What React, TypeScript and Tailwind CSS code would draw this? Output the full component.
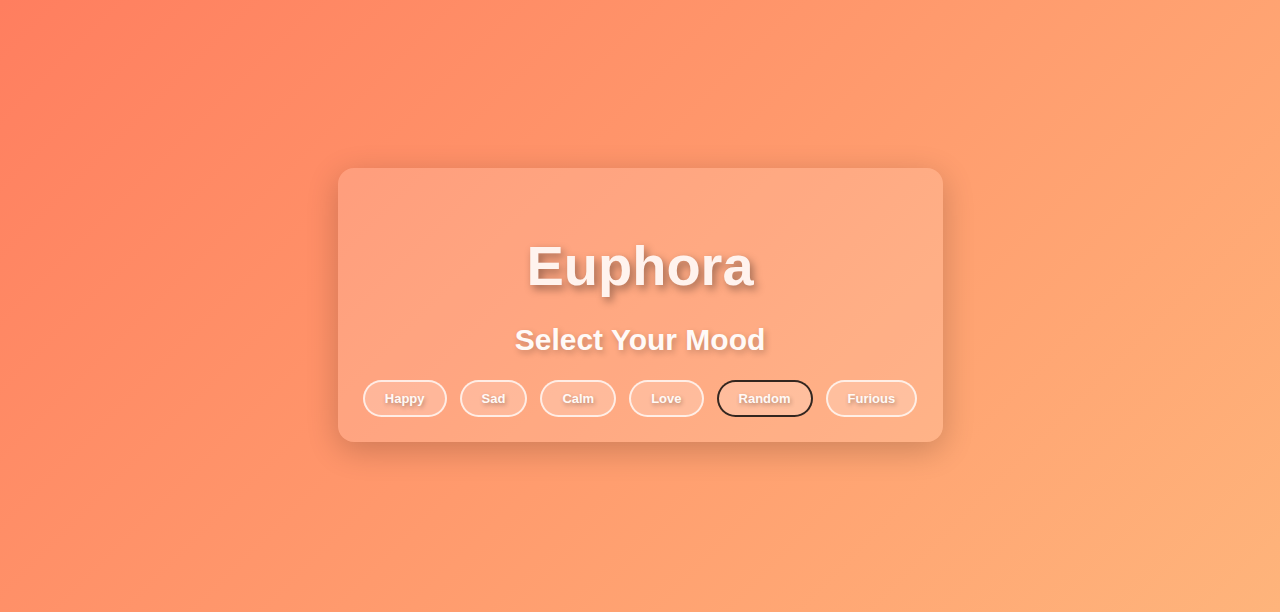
const moods = ['Happy', 'Sad', 'Calm', 'Love', 'Random', 'Furious'];

export default function App() {
  return (
    <div
      className="min-h-screen flex items-center justify-center bg-linear-135 from-[#ff7e5f] to-[#feb47b]"
      style={{ fontFamily: '"Liberation Sans", Arial, sans-serif' }}
    >
      {/* Mood card */}
      <div className="w-[605px] h-[274px] mb-[2px] rounded-2xl bg-white/15 shadow-[0_8px_32px_rgba(0,0,0,0.2)] px-[25px] pb-[25px] pt-[66px] flex flex-col items-center text-center">
        <h1 className="text-[56px] font-bold leading-[64px] text-[#fff3ee] [text-shadow:3px_4px_9px_rgba(0,0,0,0.38)]">
          Euphora
        </h1>
        <h2 className="mt-[25px] text-[30px] font-bold leading-[34px] text-[#fffaf7] [text-shadow:2px_3px_6px_rgba(0,0,0,0.22)]">
          Select Your Mood
        </h2>
        <div className="mt-[23px] flex gap-[13px]">
          {moods.map((m) => (
            <button
              key={m}
              className={`px-5 py-[9px] rounded-full border-2 bg-white/20 text-[#fffaf7] text-[13px] font-bold leading-[15px] [text-shadow:1px_2px_4px_rgba(0,0,0,0.3)] cursor-pointer ${
                m === 'Random' ? 'border-black/80' : 'border-white/75'
              }`}
            >
              {m}
            </button>
          ))}
        </div>
      </div>
    </div>
  );
}
